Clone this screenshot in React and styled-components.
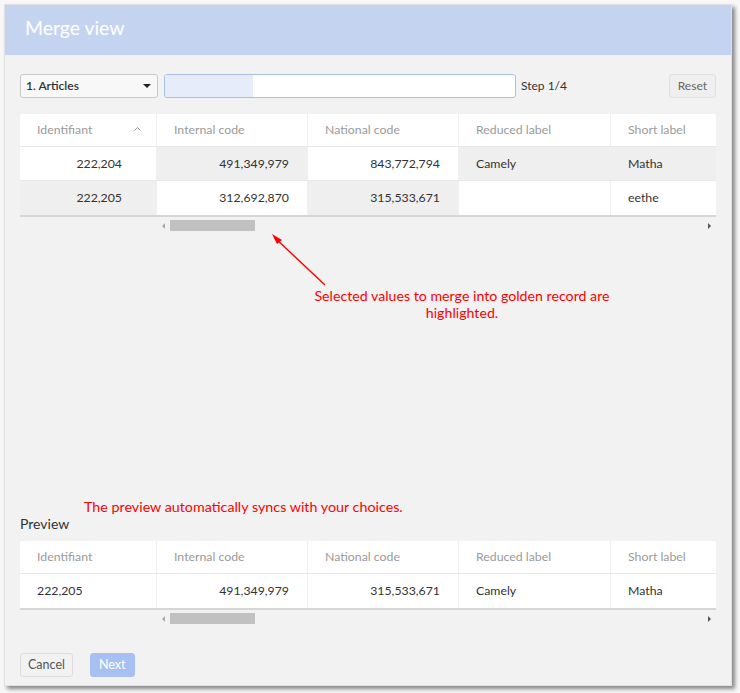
import React from 'react'
import styled, { createGlobalStyle } from 'styled-components'
import { ChevronUp } from 'lucide-react'

// Global ------------------------------------------------------------
const GlobalStyle = createGlobalStyle`
  html, body {
    margin: 0;
    padding: 0;
    background: #f7f7f7;
  }
  body {
    font-family: Lato, "Open Sans", "Liberation Sans", sans-serif;
    color: #333;
  }
`

// Window ------------------------------------------------------------
const Page = styled.div`
  padding: 4px 0 0 4px;
  width: 740px;
  height: 693px;
  box-sizing: border-box;
`
const Window = styled.div`
  width: 728px;
  height: 682px;
  background: #f2f2f2;
  border: 1px solid #e2e2e2;
  box-sizing: border-box;
  box-shadow: 3px 3px 4px rgba(0, 0, 0, 0.45);
  display: flex;
  flex-direction: column;
`
const Header = styled.div`
  height: 50px;
  background: #c4d4f0;
  display: flex;
  align-items: center;
  padding: 0 0 5px 20px;
  box-sizing: border-box;
  flex-shrink: 0;
`
const Title = styled.h1`
  margin: 0;
  font-size: 19.4px;
  font-weight: 400;
  color: #fff;
`
const Body = styled.div`
  position: relative;
  flex: 1;
  display: flex;
  flex-direction: column;
  padding: 19px 15px 8px 15px;
`

// Toolbar -----------------------------------------------------------
const Toolbar = styled.div`
  display: flex;
  align-items: center;
  height: 24px;
  gap: 6px;
`
const Select = styled.div`
  width: 138px;
  height: 24px;
  box-sizing: border-box;
  border: 1px solid #c8c8c8;
  border-radius: 3px;
  background: #f8f8f8;
  display: flex;
  align-items: center;
  justify-content: space-between;
  padding: 0 6px 1px 5px;
  font-size: 12px;
  font-weight: 600;
  color: #333;
`
const Caret = styled.span`
  width: 0;
  height: 0;
  border-left: 4px solid transparent;
  border-right: 4px solid transparent;
  border-top: 4px solid #222;
`
const Progress = styled.div`
  width: 352px;
  height: 24px;
  box-sizing: border-box;
  border: 1px solid #a9bfeb;
  border-radius: 3px;
  background: #fff;
  overflow: hidden;
`
const ProgressFill = styled.div`
  height: 100%;
  background: #e6ecf9;
`
const StepLabel = styled.span`
  font-size: 12px;
  color: #333;
  margin: 0 0 1px -1px;
`
const SmallButton = styled.button`
  margin-left: auto;
  height: 24px;
  padding: 0 8px 1px;
  border: 1px solid #e0e0e0;
  border-radius: 3px;
  background: #efefef;
  color: #666;
  font-family: inherit;
  font-size: 12px;
`

// Table -------------------------------------------------------------
const TableWrap = styled.div`
  width: 696px;
  background: #fff;
  border-radius: 3px 3px 0 0;
  overflow: hidden;
  box-shadow: 0 2px 0 #d6d6d6;
  margin-top: ${(p) => p.$top || 0}px;
`
const Row = styled.div`
  display: grid;
  grid-template-columns: 137px 151px 151px 152px 152px;
  height: ${(p) => (p.$head ? 33 : 34)}px;
  border-bottom: ${(p) => (p.$last ? 'none' : '1px solid #e8e8e8')};
  box-sizing: border-box;
`
const Cell = styled.div`
  display: flex;
  align-items: center;
  justify-content: ${(p) => (p.$right ? 'flex-end' : 'flex-start')};
  padding: 0 ${(p) => (p.$padRight ? p.$padRight : 17)}px 1px 17px;
  font-size: 12.3px;
  color: ${(p) => (p.$head ? '#9a9a9a' : '#333')};
  background: ${(p) => (p.$sel ? '#efefef' : '#fff')};
  border-right: 1px solid #f0f0f0;
  white-space: nowrap;
  position: relative;
`
const SortIcon = styled.span`
  position: absolute;
  right: 13px;
  top: 50%;
  transform: translateY(-60%);
  color: #888;
  display: flex;
`

// Scrollbar ---------------------------------------------------------
const Scrollbar = styled.div`
  margin: ${(p) => p.$top || 5}px 0 0 137px;
  width: 559px;
  height: 11px;
  display: flex;
  align-items: center;
`
const ArrowTri = styled.span`
  width: 0;
  height: 0;
  border-top: 3px solid transparent;
  border-bottom: 3px solid transparent;
  ${(p) =>
    p.$dir === 'left'
      ? 'border-right: 3px solid #aaa; margin: 0 5px 0 5px;'
      : 'border-left: 3px solid #555; margin: 0 5px 0 auto;'}
`
const Thumb = styled.span`
  width: 85px;
  height: 11px;
  background: #c1c1c1;
`

// Annotations -------------------------------------------------------
const Callout = styled.div`
  margin: 56px 0 0 0;
  padding-left: 273px;
  width: 338px;
  text-align: center;
  color: #f00;
  font-size: 14.2px;
  line-height: 17px;
`
const Note = styled.div`
  margin-top: auto;
  padding-left: 64px;
  color: #f00;
  font-size: 14.3px;
  line-height: 17px;
`
const ArrowSvg = styled.svg`
  position: absolute;
  left: 250px;
  top: 122px;
  overflow: visible;
`
const SectionLabel = styled.div`
  font-size: 14px;
  line-height: 17px;
  color: #333;
  margin-top: 0;
`

// Footer ------------------------------------------------------------
const Footer = styled.div`
  display: flex;
  gap: 17px;
  margin-top: 29px;
`
const FootButton = styled.button`
  height: 24px;
  padding: 0 ${(p) => (p.$primary ? 8 : 7)}px 1px;
  border-radius: 3px;
  font-family: inherit;
  font-size: 12.5px;
  border: 1px solid ${(p) => (p.$primary ? '#a7c0f2' : '#dcdcdc')};
  background: ${(p) => (p.$primary ? '#a7c0f2' : '#f2f2f2')};
  color: ${(p) => (p.$primary ? '#fff' : '#555')};
`

const columns = ['Identifiant', 'Internal code', 'National code', 'Reduced label', 'Short label']

const rows = [
  [
    { v: '222,204', r: true, pr: 34 },
    { v: '491,349,979', r: true, sel: true },
    { v: '843,772,794', r: true },
    { v: 'Camely', sel: true },
    { v: 'Matha', sel: true },
  ],
  [
    { v: '222,205', r: true, pr: 34, sel: true },
    { v: '312,692,870', r: true },
    { v: '315,533,671', r: true, sel: true },
    { v: '' },
    { v: 'eethe' },
  ],
]

const preview = [
  { v: '222,205' },
  { v: '491,349,979', r: true },
  { v: '315,533,671', r: true },
  { v: 'Camely' },
  { v: 'Matha' },
]

function HeadRow({ sortable }) {
  return (
    <Row $head>
      {columns.map((c, i) => (
        <Cell key={c} $head>
          {c}
          {sortable && i === 0 && (
            <SortIcon>
              <ChevronUp size={11} strokeWidth={2} />
            </SortIcon>
          )}
        </Cell>
      ))}
    </Row>
  )
}

function DataRow({ cells, last }) {
  return (
    <Row $last={last}>
      {cells.map((c, i) => (
        <Cell key={i} $right={c.r} $sel={c.sel} $padRight={c.pr || 18}>
          {c.v}
        </Cell>
      ))}
    </Row>
  )
}

function HScroll({ top }) {
  return (
    <Scrollbar $top={top}>
      <ArrowTri $dir="left" />
      <Thumb />
      <ArrowTri $dir="right" />
    </Scrollbar>
  )
}

export default function App() {
  return (
    <>
      <GlobalStyle />
      <Page>
        <Window>
          <Header>
            <Title>Merge view</Title>
          </Header>
          <Body>
            <Toolbar>
              <Select>
                1. Articles
                <Caret />
              </Select>
              <Progress>
                <ProgressFill style={{ width: '25%' }} />
              </Progress>
              <StepLabel>Step 1/4</StepLabel>
              <SmallButton>Reset</SmallButton>
            </Toolbar>

            <TableWrap $top={16}>
              <HeadRow sortable />
              {rows.map((r, i) => (
                <DataRow key={i} cells={r} last={i === rows.length - 1} />
              ))}
            </TableWrap>
            <HScroll top={5} />

            <ArrowSvg width="60" height="60">
              <line x1="70" y1="108" x2="20" y2="61" stroke="#f00" strokeWidth="1.4" />
              <polygon points="17,57 27,63 22,67" fill="#f00" />
            </ArrowSvg>

            <Callout>
              Selected values to merge into golden record are highlighted.
            </Callout>

            <Note>The preview automatically syncs with your choices.</Note>
            <SectionLabel>Preview</SectionLabel>

            <TableWrap $top={9}>
              <HeadRow />
              <DataRow cells={preview} last />
            </TableWrap>
            <HScroll top={5} />

            <Footer>
              <FootButton>Cancel</FootButton>
              <FootButton $primary>Next</FootButton>
            </Footer>
          </Body>
        </Window>
      </Page>
    </>
  )
}
